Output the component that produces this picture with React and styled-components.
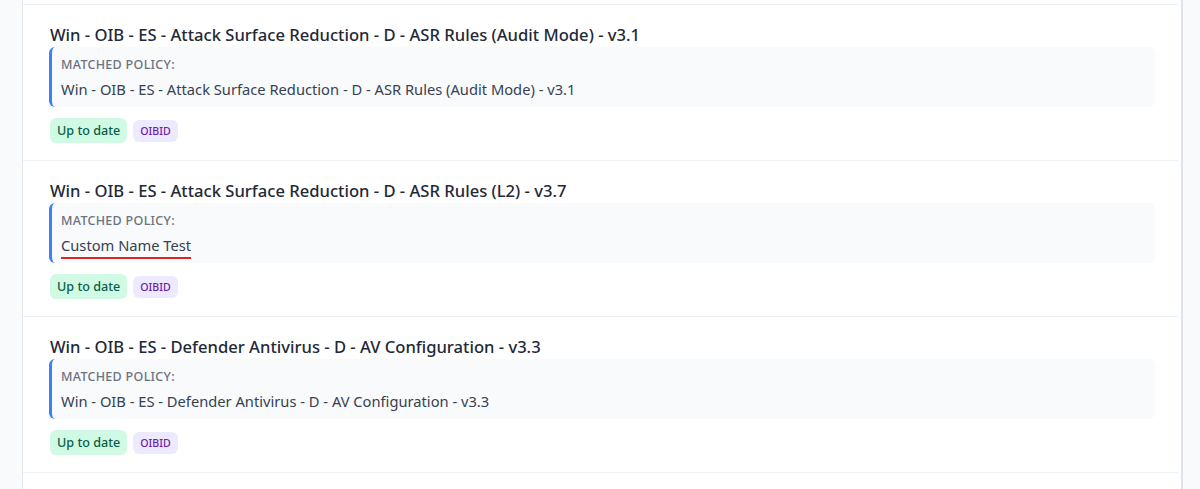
import React from "react";
import styled, { createGlobalStyle } from "styled-components";

const Global = createGlobalStyle`
  html, body { margin: 0; padding: 0; background: #f8fafc; }
  body { font-family: "Noto Sans", "Open Sans", sans-serif; overflow: hidden; }
`;

const Page = styled.div`
  display: flex;
  height: 489px;
`;

const Gutter = styled.div`
  width: 22px;
  flex: none;
  background: #f8fafc;
`;

const Panel = styled.div`
  width: 1155px;
  flex: none;
  background: #ffffff;
  border-left: 1px solid #e5e9ef;
  border-right: 2px solid #dfe4ea;
  padding: 4px 3px 0 0;
`;

const List = styled.div`
  display: flex;
  flex-direction: column;
`;

const Row = styled.div`
  border-top: 1px solid #eef1f4;
  padding: 18px 23px 17px 26px;
  display: flex;
  flex-direction: column;
`;

const Title = styled.div`
  font-size: 16.6px;
  line-height: 24px;
  font-weight: 500;
  color: #1f2937;
  padding-left: 1px;
`;

const Match = styled.div`
  background: #f8fafc;
  border-left: 3px solid #3b82f6;
  border-radius: 6px;
  padding: 10px 9px 8px;
  display: flex;
  flex-direction: column;
  gap: 6px;
`;

const Label = styled.div`
  font-size: 12.5px;
  line-height: 16px;
  font-weight: 500;
  color: #6b7280;
  letter-spacing: 0.3px;
  text-transform: uppercase;
`;

const PolicyName = styled.div`
  font-size: 14.7px;
  line-height: 20px;
  color: #374151;
`;

const Marked = styled.span`
  text-decoration: underline;
  text-decoration-color: #dc2626;
  text-decoration-thickness: 2px;
  text-underline-offset: 6px;
`;

const Badges = styled.div`
  display: flex;
  align-items: center;
  gap: 6px;
  margin-top: 11px;
  padding-left: 1px;
`;

const Badge = styled.span`
  display: inline-flex;
  align-items: center;
  border-radius: 6px;
  height: ${(p) => (p.$kind === "status" ? "25px" : "22px")};
  padding: 0 7px;
  font-size: ${(p) => (p.$kind === "status" ? "12.6px" : "10.6px")};
  font-weight: 500;
  background: ${(p) => (p.$kind === "status" ? "#d1fae5" : "#ede9fe")};
  color: ${(p) => (p.$kind === "status" ? "#065f46" : "#6b21a8")};
`;

const rows = [
  {
    title: "Win - OIB - ES - Attack Surface Reduction - D - ASR Rules (Audit Mode) - v3.1",
    match: "Win - OIB - ES - Attack Surface Reduction - D - ASR Rules (Audit Mode) - v3.1",
  },
  {
    title: "Win - OIB - ES - Attack Surface Reduction - D - ASR Rules (L2) - v3.7",
    match: "Custom Name Test",
    marked: true,
  },
  {
    title: "Win - OIB - ES - Defender Antivirus - D - AV Configuration - v3.3",
    match: "Win - OIB - ES - Defender Antivirus - D - AV Configuration - v3.3",
  },
];

export default function App() {
  return (
    <>
      <Global />
      <Page>
        <Gutter />
        <Panel>
          <List>
            {rows.map((r) => (
              <Row key={r.title}>
                <Title>{r.title}</Title>
                <Match>
                  <Label>Matched Policy:</Label>
                  <PolicyName>{r.marked ? <Marked>{r.match}</Marked> : r.match}</PolicyName>
                </Match>
                <Badges>
                  <Badge $kind="status">Up to date</Badge>
                  <Badge $kind="tag">OIBID</Badge>
                </Badges>
              </Row>
            ))}
            <Row />
          </List>
        </Panel>
      </Page>
    </>
  );
}
